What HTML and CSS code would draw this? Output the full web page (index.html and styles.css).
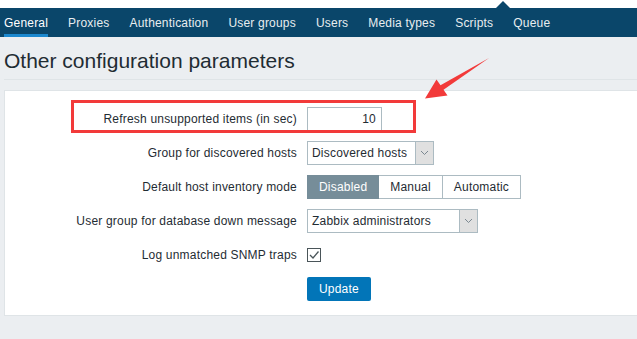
FILE: index.html
```html
<!DOCTYPE html>
<html lang="en">
<head>
<meta charset="utf-8">
<title>Other configuration parameters</title>
<link rel="stylesheet" href="styles.css">
</head>
<body>
<header class="header">
  <span class="nav-notch"></span>
  <ul class="nav">
    <li class="nav-item active">General</li>
    <li class="nav-item">Proxies</li>
    <li class="nav-item">Authentication</li>
    <li class="nav-item">User groups</li>
    <li class="nav-item">Users</li>
    <li class="nav-item">Media types</li>
    <li class="nav-item">Scripts</li>
    <li class="nav-item">Queue</li>
  </ul>
</header>
<main class="page">
  <h1 class="title">Other configuration parameters</h1>
  <section class="panel">
    <form class="form">
      <label class="field-label">Refresh unsupported items (in sec)</label>
      <div class="field-control"><input class="text-input" type="text" value="10"></div>

      <label class="field-label">Group for discovered hosts</label>
      <div class="field-control">
        <div class="select select-sm">
          <span class="select-value">Discovered hosts</span>
          <span class="select-btn"><svg width="9" height="6" viewBox="0 0 9 6"><path d="M1 1 L4.5 4.5 L8 1" fill="none" stroke="#7b8891" stroke-width="1"/></svg></span>
        </div>
      </div>

      <label class="field-label">Default host inventory mode</label>
      <div class="field-control">
        <div class="radio-group">
          <span class="radio selected">Disabled</span>
          <span class="radio">Manual</span>
          <span class="radio">Automatic</span>
        </div>
      </div>

      <label class="field-label">User group for database down message</label>
      <div class="field-control">
        <div class="select select-lg">
          <span class="select-value">Zabbix administrators</span>
          <span class="select-btn"><svg width="9" height="6" viewBox="0 0 9 6"><path d="M1 1 L4.5 4.5 L8 1" fill="none" stroke="#7b8891" stroke-width="1"/></svg></span>
        </div>
      </div>

      <label class="field-label">Log unmatched SNMP traps</label>
      <div class="field-control">
        <span class="checkbox"><svg width="12" height="12" viewBox="0 0 12 12"><path d="M2 6 L5 9 L10.5 2.5" fill="none" stroke="#4a5559" stroke-width="1.3"/></svg></span>
      </div>

      <span class="field-label"></span>
      <div class="field-control"><button class="btn" type="button">Update</button></div>
    </form>
  </section>
</main>

<div class="highlight-box"></div>
<svg class="arrow" width="637" height="339" viewBox="0 0 637 339">
  <polygon points="489,58 443.5,89.8 447.5,95.5 425,98.5 436.5,79.5 440.5,85.2" fill="#f23a3a"/>
</svg>
</body>
</html>
```

FILE: styles.css
```css
* { box-sizing: border-box; }

html, body {
  margin: 0;
  width: 637px;
  height: 339px;
  overflow: hidden;
}

body {
  position: relative;
  background: #ebeef1;
  color: #1f2c33;
  font-family: "Liberation Sans", Arial, sans-serif;
  font-size: 12px;
  letter-spacing: 0.2px;
}

.header {
  background: #ffffff;
  padding-top: 8px;
  position: relative;
}

.nav-notch {
  position: absolute;
  left: 496px;
  top: 1px;
  width: 0;
  height: 0;
  border-left: 7.5px solid transparent;
  border-right: 7.5px solid transparent;
  border-bottom: 7px solid #0a466a;
}

.nav {
  list-style: none;
  margin: 0;
  padding: 0 0 0 4px;
  background: #0a466a;
  height: 29px;
  display: flex;
  gap: 20px;
}

.nav-item {
  display: flex;
  align-items: center;
  height: 29px;
  color: #e8edf0;
}

.nav-item.active {
  box-shadow: inset 0 -3px 0 #1b88cf;
  color: #ffffff;
}

.page {
  padding-left: 4px;
}

.title {
  margin: 0;
  font-size: 21px;
  font-weight: normal;
  letter-spacing: 0;
  line-height: 22px;
  padding: 13px 0 7px 0;
  border-bottom: 1px solid #dfe4e7;
  color: #1f2c33;
}

.panel {
  margin-top: 10px;
  background: #ffffff;
  border: 1px solid #dfe4e7;
  border-right: none;
  padding: 16px 0 14px 0;
}

.form {
  display: grid;
  grid-template-columns: 292px auto;
  column-gap: 10px;
  row-gap: 10px;
  align-items: center;
}

.field-label {
  text-align: right;
  color: #1f2c33;
}

.field-control {
  display: flex;
  align-items: center;
  height: 24px;
}

.text-input {
  width: 75px;
  height: 24px;
  border: 1px solid #acbbc2;
  padding: 0 5px;
  text-align: right;
  font-family: inherit;
  font-size: 12px;
  letter-spacing: 0.2px;
  color: #1f2c33;
  background: #fff;
  outline: none;
}

.select {
  display: flex;
  height: 24px;
  border: 1px solid #acbbc2;
  background: #fff;
}

.select-sm { width: 127px; }
.select-lg { width: 171px; }

.select-value {
  flex: 1;
  padding-left: 4px;
  line-height: 22px;
  white-space: nowrap;
  overflow: hidden;
}

.select-btn {
  width: 18px;
  background: #e0e0e0;
  border-left: 1px solid #acbbc2;
  display: flex;
  align-items: center;
  justify-content: center;
}

.radio-group {
  display: flex;
  height: 24px;
}

.radio {
  display: flex;
  align-items: center;
  padding: 0 11px;
  border: 1px solid #acbbc2;
  background: #fff;
  color: #1f2c33;
}

.radio + .radio {
  border-left: none;
}

.radio.selected {
  background: #768d99;
  border-color: #768d99;
  color: #ffffff;
}

.checkbox {
  width: 14px;
  height: 14px;
  border: 1px solid #4a5559;
  display: flex;
  align-items: center;
  justify-content: center;
  background: #fff;
}

.btn {
  height: 24px;
  padding: 0 12px;
  border: none;
  border-radius: 2px;
  background: #0275b8;
  color: #ffffff;
  font-family: inherit;
  font-size: 12px;
  letter-spacing: 0.2px;
}

.highlight-box {
  position: absolute;
  left: 71px;
  top: 100px;
  width: 345px;
  height: 33px;
  border: 3px solid #f23a3a;
  pointer-events: none;
}

.arrow {
  position: absolute;
  left: 0;
  top: 0;
  pointer-events: none;
}
```
